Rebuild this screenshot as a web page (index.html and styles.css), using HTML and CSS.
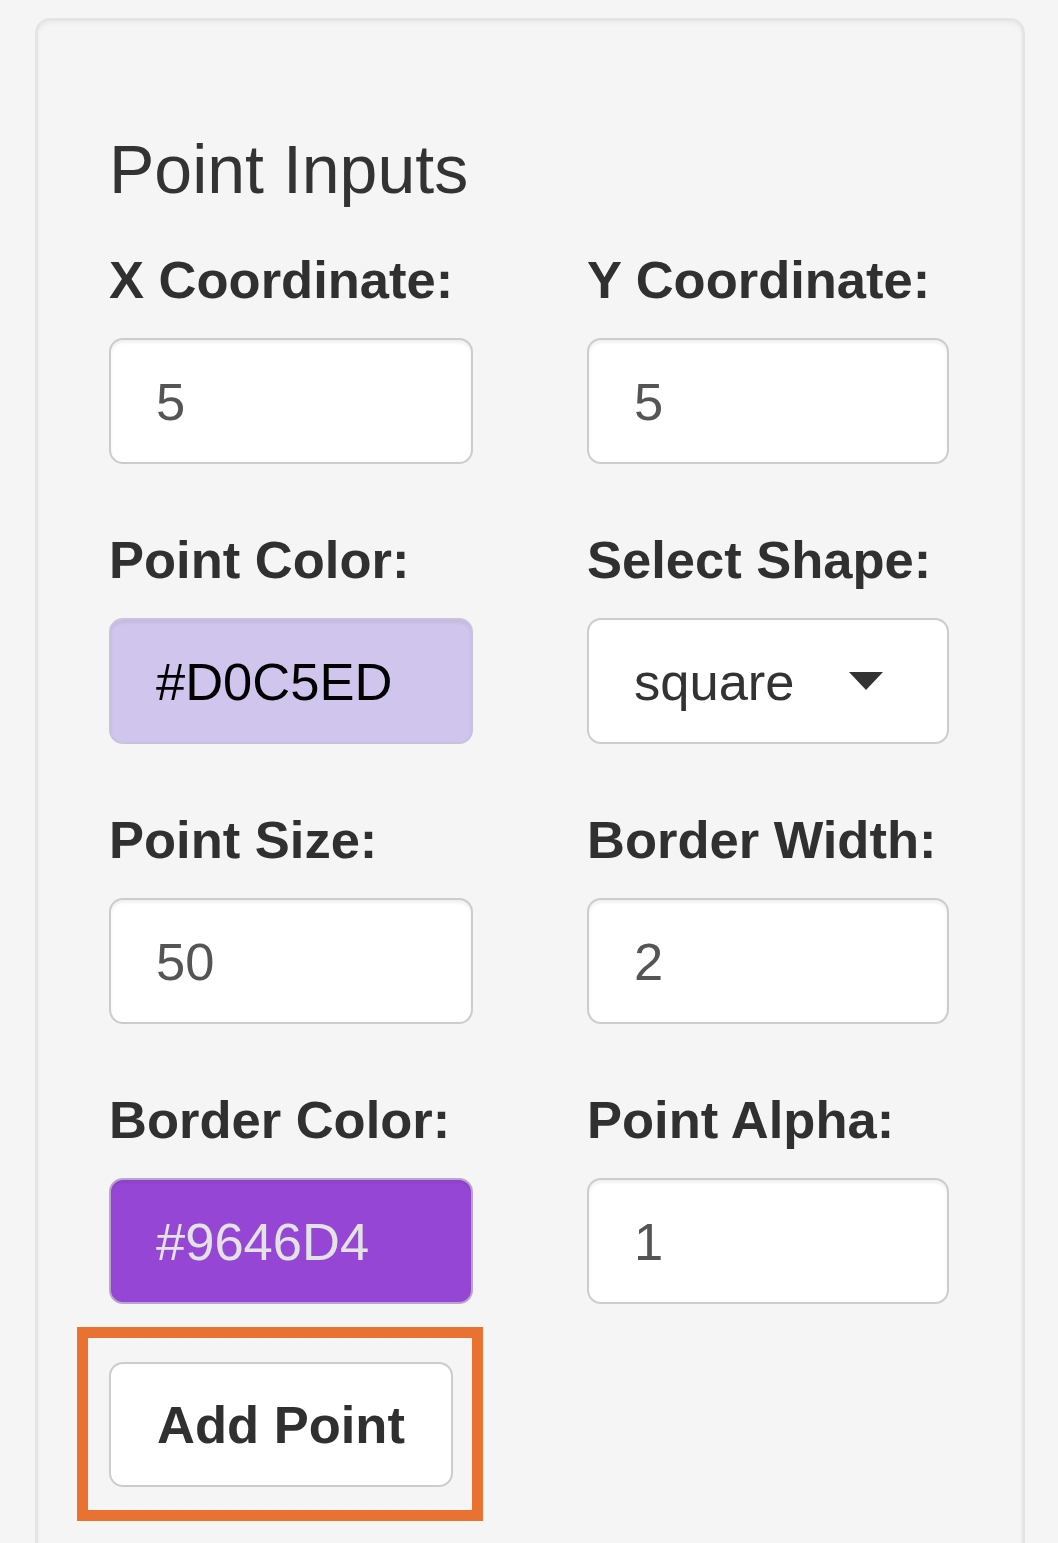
FILE: index.html
```html
<!DOCTYPE html>
<html>
<head>
<meta charset="utf-8">
<link rel="stylesheet" href="styles.css">
</head>
<body>
<div class="well">
  <h4 class="title">Point Inputs</h4>
  <div class="grid">
    <div class="field">
      <label class="label">X Coordinate:</label>
      <div class="control">5</div>
    </div>
    <div class="field">
      <label class="label">Y Coordinate:</label>
      <div class="control">5</div>
    </div>
    <div class="field">
      <label class="label">Point Color:</label>
      <div class="control color-light">#D0C5ED</div>
    </div>
    <div class="field">
      <label class="label">Select Shape:</label>
      <div class="control select"><span class="select-text">square</span><span class="caret"></span></div>
    </div>
    <div class="field">
      <label class="label">Point Size:</label>
      <div class="control">50</div>
    </div>
    <div class="field">
      <label class="label">Border Width:</label>
      <div class="control">2</div>
    </div>
    <div class="field">
      <label class="label">Border Color:</label>
      <div class="control color-dark">#9646D4</div>
    </div>
    <div class="field">
      <label class="label">Point Alpha:</label>
      <div class="control">1</div>
    </div>
  </div>
  <div class="highlight">
    <button class="btn">Add Point</button>
  </div>
</div>
</body>
</html>
```

FILE: styles.css
```css
html, body {
  margin: 0;
  padding: 0;
  background: #f5f5f5;
}
body {
  font-family: "Liberation Sans", Arial, Helvetica, sans-serif;
  color: #333;
}
.well {
  box-sizing: border-box;
  margin: 18px 0 0 35px;
  width: 990px;
  min-height: 1560px;
  background: #f5f5f5;
  border: 3px solid #e4e4e4;
  border-bottom: none;
  border-radius: 15px 15px 0 0;
  box-shadow: inset 0 3px 4px rgba(0, 0, 0, 0.04);
  padding: 111px 0 60px 71px;
}
.title {
  margin: 0 0 44px 0;
  font-size: 68px;
  line-height: 74px;
  font-weight: normal;
  color: #333;
}
.grid {
  display: grid;
  grid-template-columns: 364px 362px;
  column-gap: 114px;
  row-gap: 66px;
}
.field {
  display: flex;
  flex-direction: column;
}
.label {
  display: block;
  font-size: 52.5px;
  line-height: 60px;
  font-weight: bold;
  margin-bottom: 28px;
  color: #303030;
}
.control {
  box-sizing: border-box;
  height: 126px;
  background: #fff;
  border: 2px solid #cccccc;
  border-radius: 14px;
  box-shadow: inset 0 3px 3px rgba(0, 0, 0, 0.06);
  padding: 0 45px;
  font-size: 52.5px;
  color: #555;
  display: flex;
  align-items: center;
}
.color-light {
  background: #D0C5ED;
  color: #000;
  border-color: #c9c2dc;
}
.color-dark {
  background: #9646D4;
  color: #e3e3e3;
  border-color: #b9a6cc;
}
.select {
  justify-content: space-between;
  padding-right: 64px;
  color: #333;
  box-shadow: none;
}
.caret {
  width: 0;
  height: 0;
  border-top: 18px solid #333;
  border-left: 17.5px solid transparent;
  border-right: 17.5px solid transparent;
}
.highlight {
  display: inline-block;
  margin: 23px 0 0 -32px;
  border: 11px solid #e97132;
  padding: 24px 19px 23px 21px;
}
.btn {
  display: block;
  box-sizing: border-box;
  width: 344px;
  height: 125px;
  padding: 0;
  background: #fff;
  border: 2px solid #cccccc;
  border-radius: 14px;
  font-family: "Liberation Sans", Arial, Helvetica, sans-serif;
  font-size: 52.5px;
  font-weight: bold;
  color: #303030;
}
```
